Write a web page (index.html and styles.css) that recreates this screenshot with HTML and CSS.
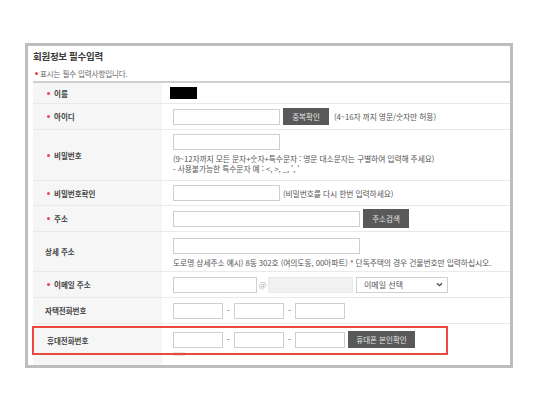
FILE: index.html
```html
<!DOCTYPE html>
<html lang="ko">
<head>
<meta charset="utf-8">
<title>회원정보 필수입력</title>
<link rel="stylesheet" href="styles.css">
</head>
<body>
<div class="frame">
  <div class="title">회원정보 필수입력</div>
  <div class="note"><span class="dot"></span>표시는 필수 입력사항입니다.</div>
  <div class="form">
    <div class="row r1">
      <div class="lab req"><span class="dot"></span>이름</div>
      <div class="val"><span class="masked"></span></div>
    </div>
    <div class="row r2">
      <div class="lab req"><span class="dot"></span>아이디</div>
      <div class="val"><span class="inp w107"></span><span class="btn b46">중복확인</span><span class="help">(4~16자 까지 영문/숫자만 허용)</span></div>
    </div>
    <div class="row r3">
      <div class="lab req"><span class="dot"></span>비밀번호</div>
      <div class="val col p4">
        <span class="inp w107"></span>
        <span class="help line first">(9~12자까지 모든 문자+숫자+특수문자 : 영문 대소문자는 구별하여 입력해 주세요)</span>
        <span class="help line">- 사용불가능한 특수문자 예 : &lt;, &gt;, _, ', '</span>
      </div>
    </div>
    <div class="row r4">
      <div class="lab req"><span class="dot"></span>비밀번호확인</div>
      <div class="val"><span class="inp w107"></span><span class="help">(비밀번호를 다시 한번 입력하세요)</span></div>
    </div>
    <div class="row r5">
      <div class="lab req"><span class="dot"></span>주소</div>
      <div class="val"><span class="inp w187"></span><span class="btn b46 tall">주소검색</span></div>
    </div>
    <div class="row r6">
      <div class="lab">상세 주소</div>
      <div class="val col p6">
        <span class="inp w187"></span>
        <span class="help line first">도로명 상세주소 예시) 8동 302호 (여의도동, 00아파트) * 단독주택의 경우 건물번호만 입력하십시오.</span>
      </div>
    </div>
    <div class="row r7">
      <div class="lab req"><span class="dot"></span>이메일 주소</div>
      <div class="val"><span class="inp w84"></span><span class="at">@</span><span class="inp w85 dis"></span><span class="sel">이메일 선택<svg class="chev" width="7" height="5" viewBox="0 0 7 5"><path d="M1 1.2 L3.5 3.6 L6 1.2" fill="none" stroke="#444" stroke-width="1.2"/></svg></span></div>
    </div>
    <div class="row r8">
      <div class="lab">자택전화번호</div>
      <div class="val"><span class="inp w50"></span><span class="dash">-</span><span class="inp w50"></span><span class="dash">-</span><span class="inp w50"></span></div>
    </div>
    <div class="row r9">
      <div class="lab">휴대전화번호</div>
      <div class="val col9">
        <div class="phone"><span class="inp w50"></span><span class="dash">-</span><span class="inp w50"></span><span class="dash">-</span><span class="inp w50"></span><span class="btn b67">휴대폰 본인확인</span></div>
        <span class="stub"></span>
      </div>
      <div class="highlight"></div>
    </div>
  </div>
</div>
</body>
</html>
```

FILE: styles.css
```css
* { box-sizing: border-box; }
html, body { margin: 0; padding: 0; background: #fff; }
body {
  font-family: "Noto Sans CJK KR", "Noto Sans", sans-serif;
  color: #333;
}
.frame {
  margin: 43px 0 0 25px;
  width: 488px;
  height: 325px;
  border: 3px solid #bdbdbd;
  overflow: hidden;
  padding-left: 5px;
}
.title {
  height: 19px;
  padding-top: 3px;
  line-height: 14px;
  font-size: 9.5px;
  font-weight: 700;
  letter-spacing: -0.3px;
  color: #3a3a3a;
}
.note {
  display: flex;
  align-items: center;
  height: 16px;
  font-size: 7.5px;
  color: #666;
  padding-left: 2px;
  letter-spacing: -0.1px;
}
.note .dot { margin-right: 2px; }
.dot {
  display: inline-block;
  width: 3px;
  height: 3px;
  border-radius: 50%;
  background: #ec4452;
}
.form {
  border-top: 2px solid #cfcfcf;
}
.row {
  display: flex;
  border-bottom: 1px solid #e9e9e9;
}
.r1 { height: 21px; }
.r2 { height: 26px; }
.r3 { height: 51px; }
.r4 { height: 25px; }
.r5 { height: 26px; }
.r6 { height: 40px; }
.r7 { height: 26px; }
.r8 { height: 26px; }
.r9 { height: 60px; position: relative; border-bottom: none; }
.lab {
  width: 129px;
  flex: none;
  background: #f6f6f6;
  display: flex;
  align-items: center;
  padding-left: 12px;
  font-size: 7.5px;
  font-weight: 700;
  color: #444;
}
.lab.req { padding-left: 14px; }
.lab .dot { margin-right: 4px; }
.r9 .lab { align-items: flex-start; padding-top: 11px; padding-left: 14px; }
.val {
  flex: 1;
  display: flex;
  align-items: center;
  padding-left: 11px;
}
.val.col { flex-direction: column; align-items: flex-start; }
.val.p4 { padding-top: 4px; }
.val.p6 { padding-top: 6px; }
.col9 { flex-direction: column; align-items: flex-start; padding-top: 7px; }
.phone { display: flex; align-items: center; }
.masked {
  display: block;
  width: 27px;
  height: 12px;
  background: #000;
  margin-left: -3px;
}
.inp {
  display: block;
  height: 16px;
  border: 1px solid #cfcfcf;
  background: #fff;
  flex: none;
}
.inp.dis { background: #f1f1f1; border-color: #eaeaea; }
.w107 { width: 107px; }
.w187 { width: 187px; }
.w84 { width: 84px; }
.w85 { width: 85px; }
.w50 { width: 50px; }
.btn {
  display: flex;
  align-items: center;
  justify-content: center;
  height: 17px;
  background: #595959;
  color: #e2e2e2;
  font-size: 7.5px;
  margin-left: 3px;
  flex: none;
}
.b46 { width: 46px; }
.b67 { width: 67px; }
.btn.tall { height: 19px; }
.help {
  font-size: 7.8px;
  color: #555;
  margin-left: 5px;
  white-space: nowrap;
  letter-spacing: -0.1px;
}
.help.line { margin-left: 0; line-height: 10px; }
.help.line.first { margin-top: 4px; }
.r4 .help { margin-left: 3px; }
.at {
  font-size: 8px;
  color: #aaa;
  width: 11px;
  text-align: center;
}
.sel {
  display: flex;
  align-items: center;
  justify-content: space-between;
  width: 92px;
  height: 16px;
  margin-left: 3px;
  border: 1px solid #cfcfcf;
  padding: 0 4px 0 7px;
  font-size: 8px;
  color: #555;
}
.chev { display: block; }
.dash {
  width: 11px;
  text-align: center;
  font-size: 8px;
  color: #555;
}
.stub {
  display: block;
  width: 12px;
  height: 4px;
  margin-top: 4px;
  background: #e6e6e6;
}
.highlight {
  position: absolute;
  left: -1px;
  top: 2px;
  width: 416px;
  height: 29px;
  border: 2px solid #ea4a3e;
  pointer-events: none;
}
```
